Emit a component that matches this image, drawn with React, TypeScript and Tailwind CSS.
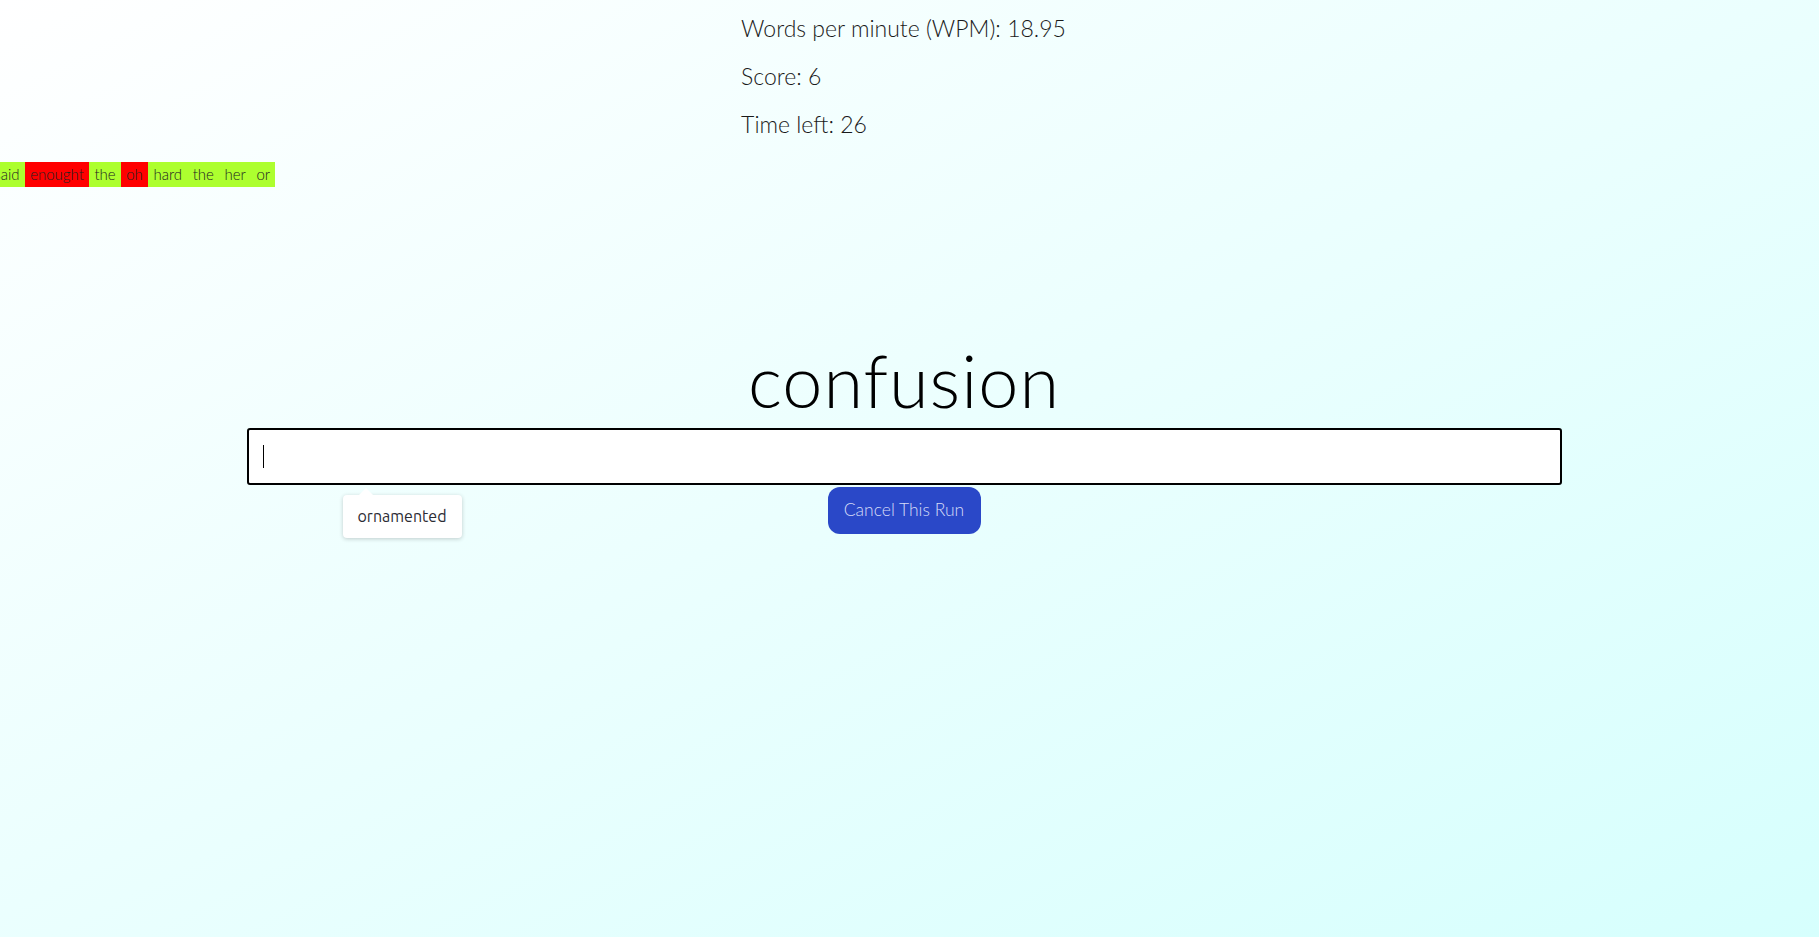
import React from "react";

const words: { w: string; ok: boolean }[] = [
  { w: "said", ok: true },
  { w: "enought", ok: false },
  { w: "the", ok: true },
  { w: "oh", ok: false },
  { w: "hard", ok: true },
  { w: "the", ok: true },
  { w: "her", ok: true },
  { w: "or", ok: true },
];

export default function App() {
  return (
    <div
      className="relative min-h-[937px] w-full overflow-hidden bg-[linear-gradient(to_bottom_right,#ffffff,#d6fffd)] text-black"
      style={{ fontFamily: "Lato, 'Open Sans', sans-serif" }}
    >
      <div className="w-[1808px] flex flex-col items-center">
        <div className="w-fit pt-[4px] font-light text-[23px] leading-[48px] text-[#1a1a1a] mr-[1px]">
          <div>Words per minute (WPM): 18.95</div>
          <div>Score: 6</div>
          <div>Time left: 26</div>
        </div>
      </div>

      <div className="mt-[14px] flex h-[25px] -ml-[11px] text-[15px] font-light leading-[25px] text-[#222]">
        {words.map((x, i) => (
          <span
            key={i}
            className={
              (x.ok ? "bg-[#adff2f]" : "bg-[#ff0000]") + " px-[5.3px]"
            }
          >
            {x.w}
          </span>
        ))}
      </div>

      <div className="w-[1808px] flex flex-col items-center">
        <div className="mt-[153px] text-[72px] leading-[80px] font-light tracking-[1px] text-black">
          confusion
        </div>
        <div className="relative mt-[8px] w-[1315px]">
          <div className="flex h-[57px] items-center rounded-[3px] border-2 border-black bg-white pl-[14px]">
            <div className="h-[23px] w-[1px] bg-black" />
          </div>
          <div className="absolute left-[96px] top-[67px] rounded-[4px] bg-white px-[15px] py-[10px] text-[16px] leading-[23px] text-[#2b2b33] shadow-[0_1px_4px_rgba(0,0,0,0.2)]" style={{ fontFamily: "Ubuntu, 'Noto Sans', sans-serif" }}>
            <div className="absolute -top-[7px] left-[15px] h-0 w-0 border-x-[8px] border-b-[8px] border-x-transparent border-b-white" />
            ornamented
          </div>
        </div>
        <button className="mt-[2px] h-[47px] w-[153px] rounded-[12px] bg-[#2a48c8] text-[17.5px] font-light text-[#d6dcf7]">
          Cancel This Run
        </button>
      </div>
    </div>
  );
}
